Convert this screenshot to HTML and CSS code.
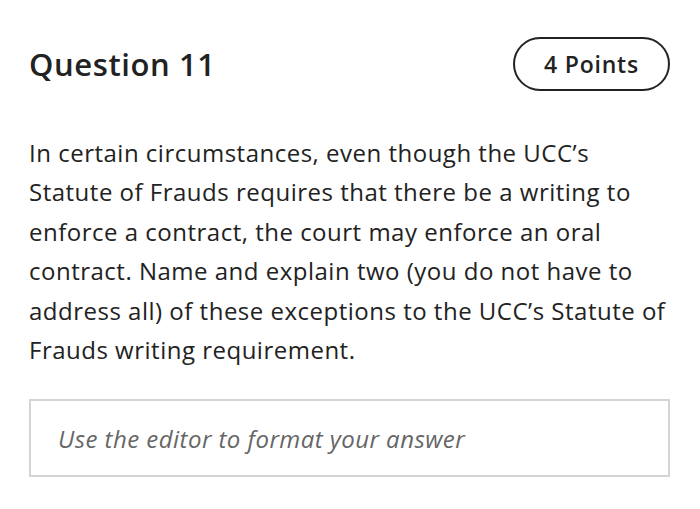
FILE: index.html
```html
<!DOCTYPE html>
<html>
<head>
<meta charset="utf-8">
<link rel="stylesheet" href="styles.css">
</head>
<body>
<div class="page">
  <div class="header">
    <h1 class="title">Question 11</h1>
    <div class="points">4 Points</div>
  </div>
  <p class="question">In certain circumstances, even though the UCC’s Statute of Frauds requires that there be a writing to enforce a contract, the court may enforce an oral contract. Name and explain two (you do not have to address all) of these exceptions to the UCC’s Statute of Frauds writing requirement.</p>
  <div class="answer"><span class="placeholder">Use the editor to format your answer</span></div>
</div>
</body>
</html>
```
FILE: styles.css
```css
html, body {
  margin: 0;
  padding: 0;
  background: #fff;
}
body {
  font-family: "Open Sans", "Liberation Sans", sans-serif;
  color: #222;
}
.page {
  padding: 37px 30px 0 29px;
}
.header {
  display: flex;
  justify-content: space-between;
  align-items: center;
  height: 54px;
}
.title {
  margin: 0;
  font-size: 31px;
  font-weight: 600;
  color: #222;
  letter-spacing: 0.6px;
}
.points {
  box-sizing: border-box;
  width: 157px;
  height: 54px;
  border: 2px solid #222;
  border-radius: 27px;
  display: flex;
  align-items: center;
  justify-content: center;
  font-size: 23px;
  font-weight: 600;
  letter-spacing: 0.8px;
}
.question {
  margin: 42px 0 0;
  font-size: 24px;
  line-height: 39.4px;
  letter-spacing: 0.5px;
  color: #222;
}
.answer {
  box-sizing: border-box;
  margin-top: 30px;
  height: 78px;
  border: 2px solid #d4d4d4;
  display: flex;
  align-items: center;
  padding-left: 27px;
}
.placeholder {
  font-style: italic;
  font-size: 24px;
  letter-spacing: 0.45px;
  color: #666;
}
```
